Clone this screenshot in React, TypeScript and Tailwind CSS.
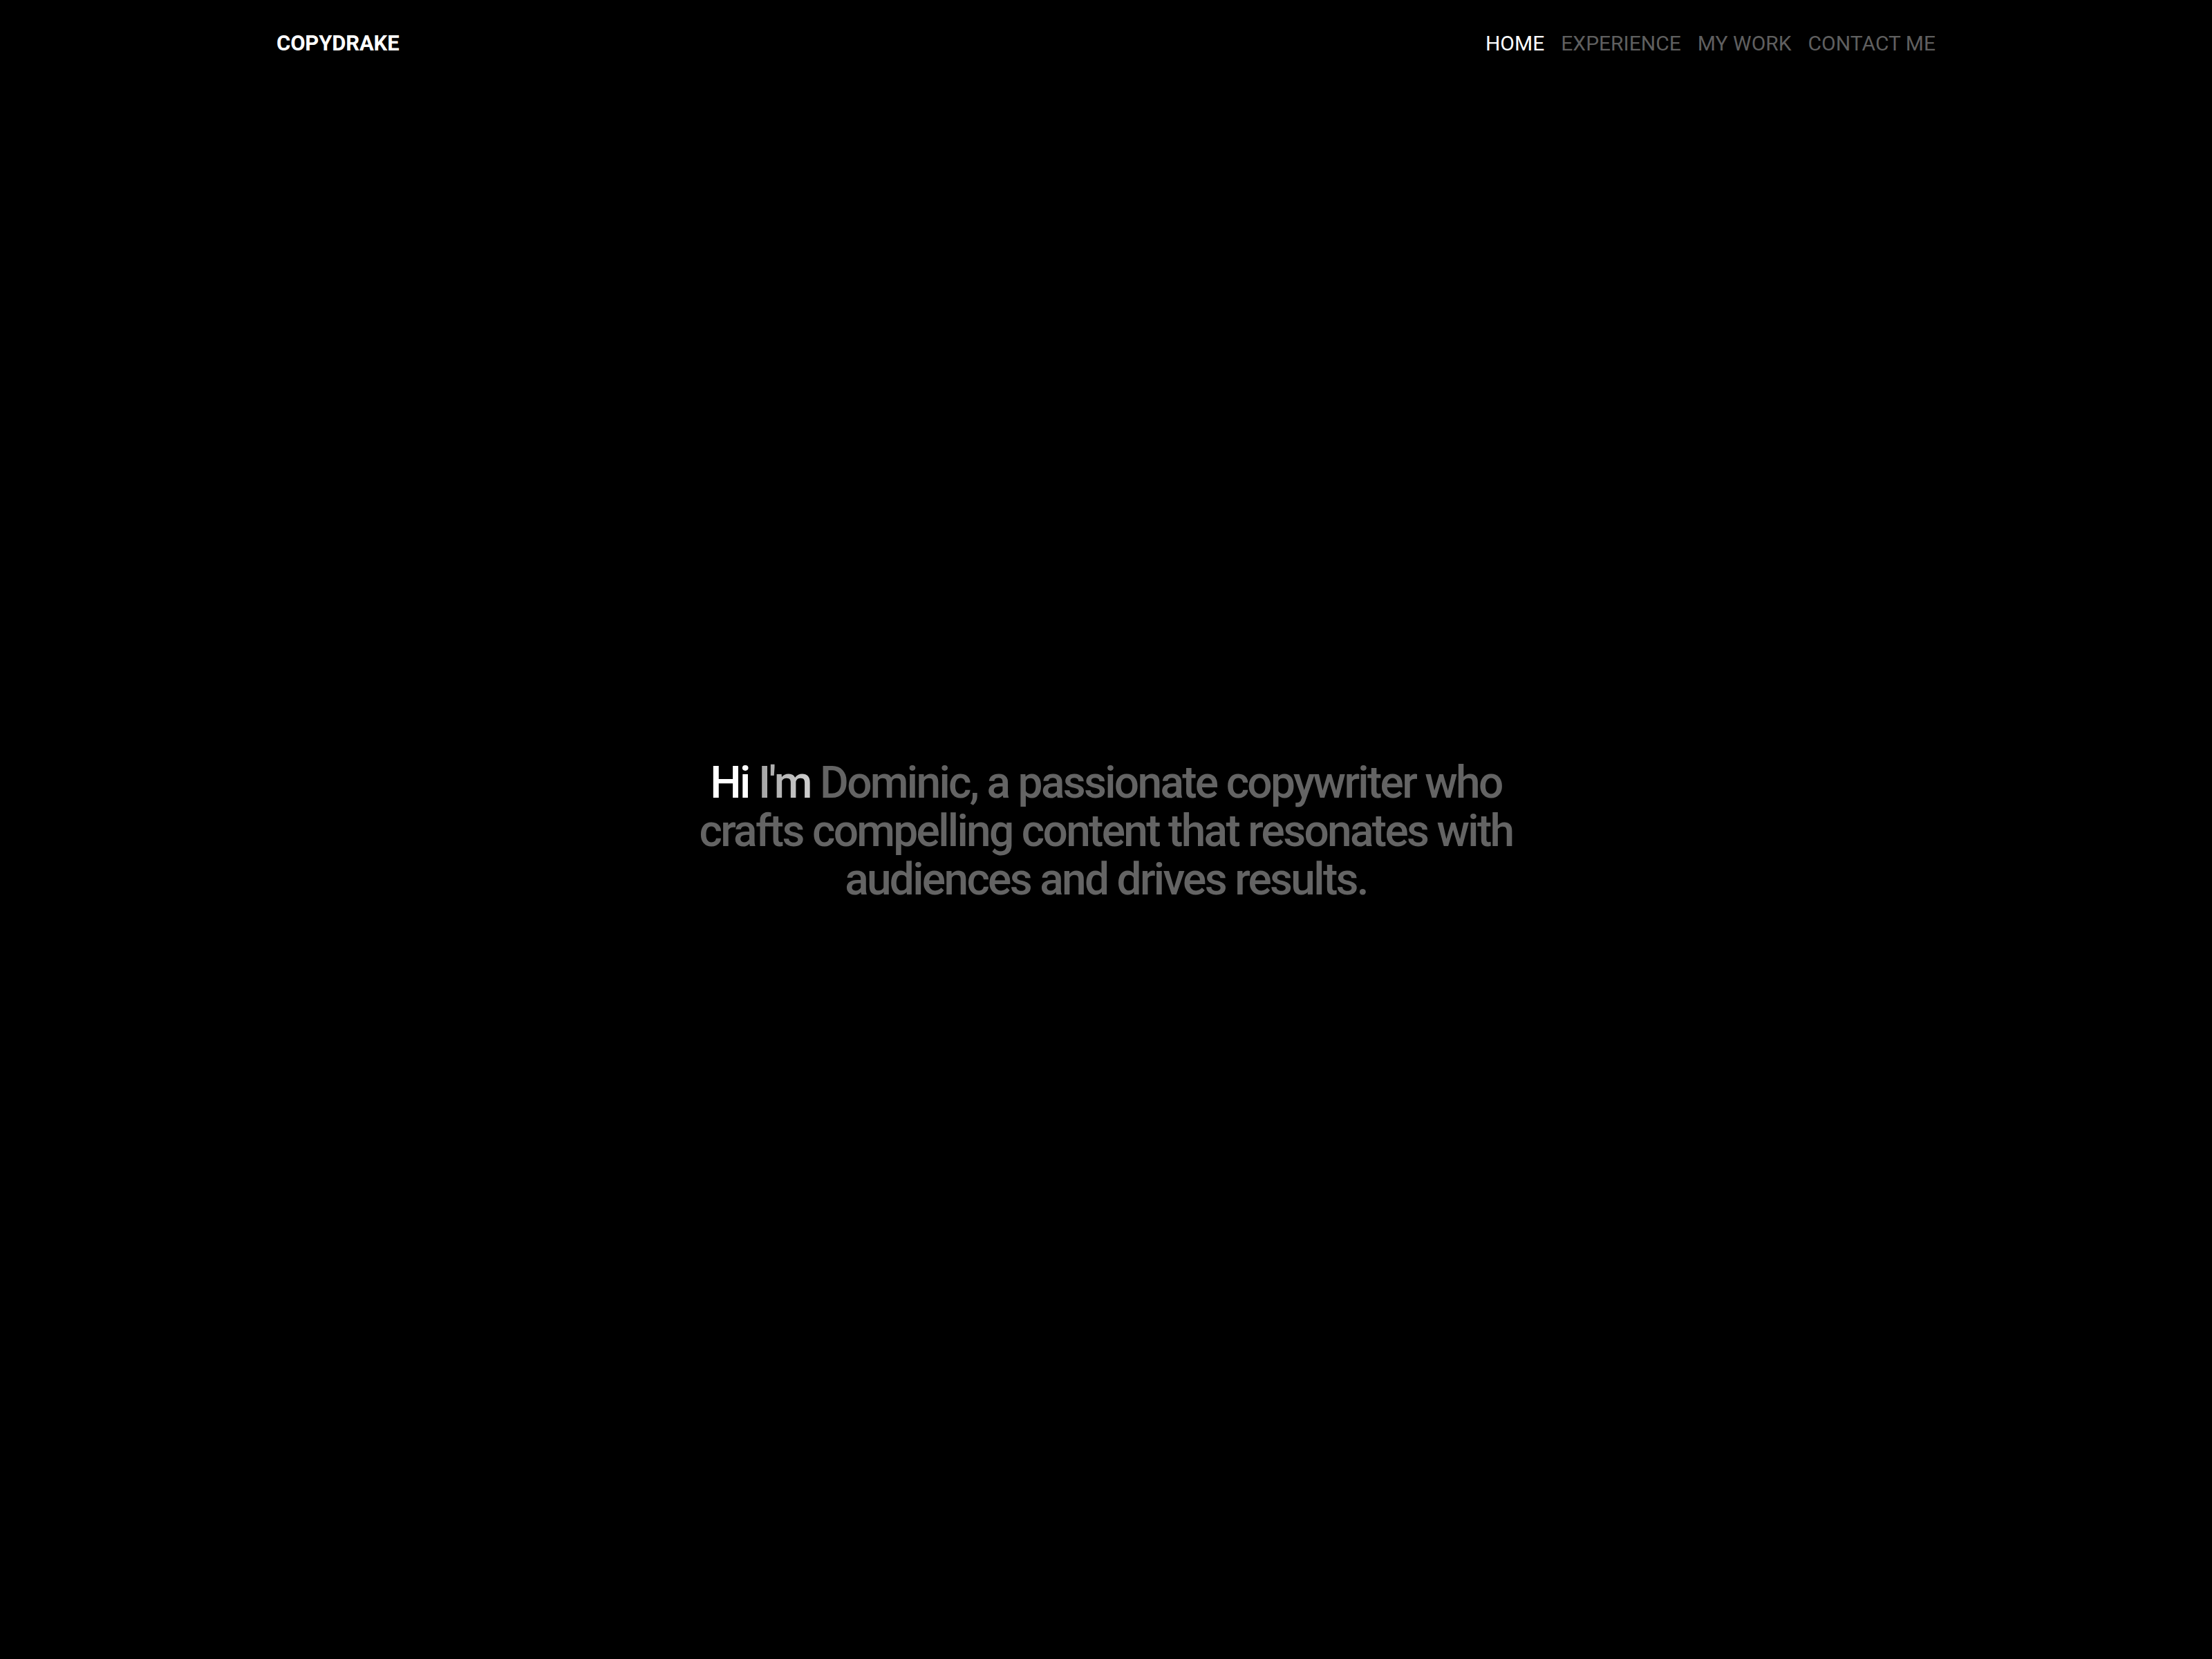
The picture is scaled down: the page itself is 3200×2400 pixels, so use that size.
import React from "react";

const navItems = [
    { label: "HOME", active: true },
    { label: "EXPERIENCE", active: false },
    { label: "MY WORK", active: false },
    { label: "CONTACT ME", active: false },
];

const Header = () => {
    return (
        <header className="mx-auto flex w-[2400px] items-center justify-between pt-[47px]">
            <a className="text-[31px] font-bold leading-none tracking-[-0.005em] text-white">COPYDRAKE</a>
            <nav className="flex items-center gap-[24px]">
                {navItems.map((item) => (
                    <a
                        key={item.label}
                        className={`text-[30px] leading-none tracking-normal ${
                            item.active ? "text-white" : "text-[#5f5f5f]"
                        }`}
                    >
                        {item.label}
                    </a>
                ))}
            </nav>
        </header>
    );
};

const Hero = () => {
    return (
        <section className="flex flex-1 items-center justify-center pb-[72px]">
            <h1 className="w-[1240px] text-center text-[64px] font-medium leading-[70px] tracking-[-0.042em] text-[#646464]">
                <span className="text-white">Hi</span>{" "}
                <span className="bg-linear-to-r from-[#a3a3a3] to-[#cfcfcf] bg-clip-text text-transparent">I'm</span>{" "}
                Dominic, a passionate copywriter who crafts compelling content that resonates with audiences and
                drives results.
            </h1>
        </section>
    );
};

export default function App() {
    return (
        <div
            className="flex min-h-screen flex-col bg-black"
            style={{ fontFamily: 'Roboto, "Liberation Sans", Arial, sans-serif' }}
        >
            <Header />
            <Hero />
        </div>
    );
}
